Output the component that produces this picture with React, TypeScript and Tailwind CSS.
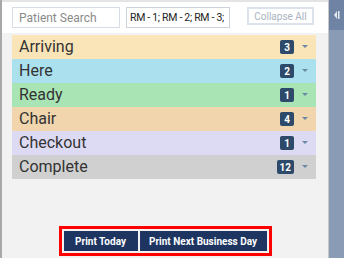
const rows = [
  { label: "Arriving", count: 3, bg: "bg-[#f9e5b8]" },
  { label: "Here", count: 2, bg: "bg-[#abe1ee]" },
  { label: "Ready", count: 1, bg: "bg-[#a9e4b4]" },
  { label: "Chair", count: 4, bg: "bg-[#f0d5ad]" },
  { label: "Checkout", count: 1, bg: "bg-[#dddaf3]" },
  { label: "Complete", count: 12, bg: "bg-[#d0d0d0]" },
];

export default function App() {
  return (
    <div className="flex h-[258px] w-[344px] overflow-hidden bg-[#f2f2f2] font-['Roboto',sans-serif]">
      <div className="w-[2px] bg-[#a8a8a8]" />
      <div className="flex flex-1 flex-col">
        <div className="flex h-[33px] items-start gap-[6px] border-t-2 border-[#e4e4e4] bg-white pl-[10px] pr-[14px] pt-[5px]">
          <input
            className="h-[21px] w-[108px] border border-[#d6dde6] px-[6px] text-[12px] text-[#555] outline-none placeholder:text-[#8a8a8a]"
            placeholder="Patient Search"
          />
          <div className="flex h-[21px] w-[104px] items-center overflow-hidden whitespace-nowrap border border-[#ccd3dc] px-[3px] text-[10.5px] tracking-[-0.3px] text-[#222]">
            RM - 1; RM - 2; RM - 3;
          </div>
          <div className="ml-auto flex h-[18px] w-[67px] items-center justify-center whitespace-nowrap border-2 border-[#dde3ea] text-[10px] text-[#a9b3c0]">
            Collapse All
          </div>
        </div>
        <div className="flex flex-col pl-[10px] pr-[12px] pt-[2px]">
          {rows.map((r) => (
            <div key={r.label} className={`flex h-[24px] items-center pl-[7px] pr-[8px] ${r.bg}`}>
              <span className="flex-1 text-[16px] text-[#333]">{r.label}</span>
              <span className="flex h-[14px] min-w-[14px] items-center justify-center rounded-[2px] bg-[#2e4a6a] px-[3px] text-[10px] font-bold text-white">
                {r.count}
              </span>
              <svg width="6" height="4" viewBox="0 0 6 4" className="ml-[8px]">
                <path d="M0 0 H6 L3 3 Z" fill="#6d87a6" />
              </svg>
            </div>
          ))}
        </div>
        <div className="mt-auto flex justify-center pb-[2px]">
          <div className="flex gap-[2px] border-[3px] border-[#ff0000] p-[2px]">
            <button className="h-[20px] w-[74px] whitespace-nowrap bg-[#1e3562] text-[10px] font-bold text-white">
              Print Today
            </button>
            <button className="h-[20px] w-[127px] whitespace-nowrap bg-[#1e3562] text-[10px] font-bold text-white">
              Print Next Business Day
            </button>
          </div>
        </div>
      </div>
      <div className="w-[1px] bg-[#c8c8c8]" />
      <div className="flex w-[15px] flex-col bg-[#8a9bb6]">
        <div className="flex h-[30px] items-center justify-center bg-[#6f84a5]">
          <svg width="6" height="8" viewBox="0 0 6 8">
            <path d="M3 0 V8 L0 4 Z" fill="#e6ebf2" />
            <rect x="4" y="0" width="1.5" height="8" fill="#e6ebf2" />
          </svg>
        </div>
      </div>
    </div>
  );
}
